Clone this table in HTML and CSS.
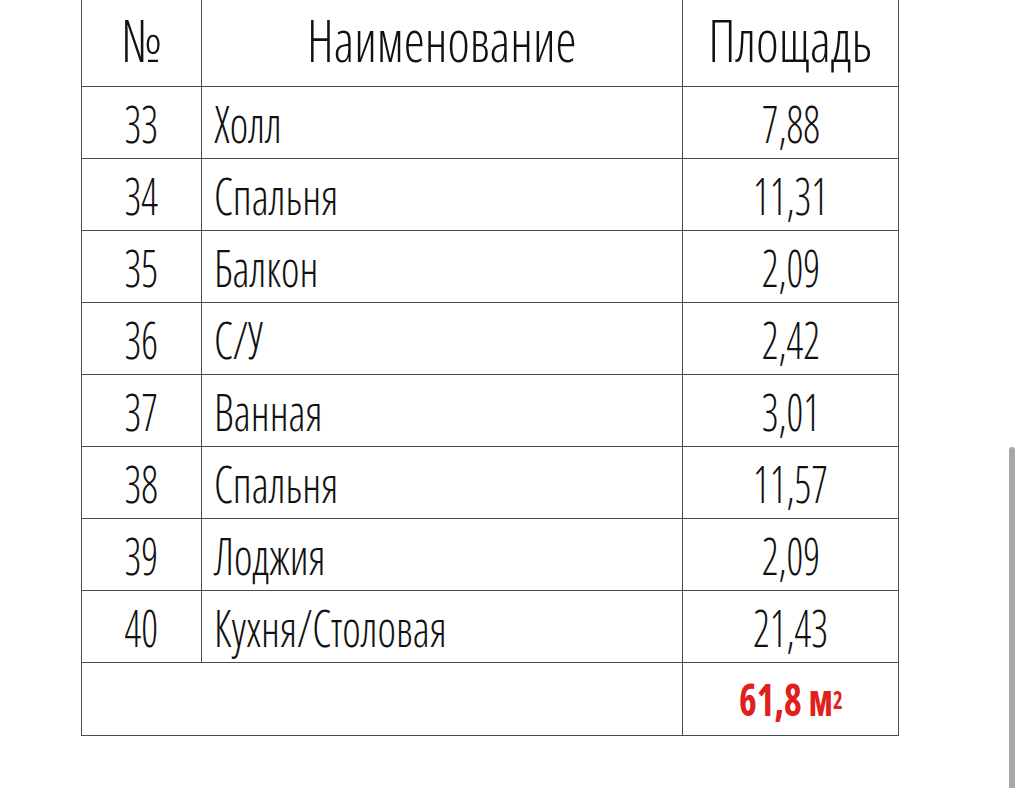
FILE: index.html
```html
<!DOCTYPE html>
<html lang="ru">
<head>
<meta charset="utf-8">
<title>Экспликация помещений</title>
<link rel="stylesheet" href="styles.css">
</head>
<body>
<div class="page">
  <div class="table">
    <div class="cell head num"><span class="t">№</span></div>
    <div class="cell head name"><span class="t">Наименование</span></div>
    <div class="cell head area"><span class="t">Площадь</span></div>

    <div class="cell num"><span class="t">33</span></div>
    <div class="cell name"><span class="t">Холл</span></div>
    <div class="cell area"><span class="t">7,88</span></div>

    <div class="cell num"><span class="t">34</span></div>
    <div class="cell name"><span class="t">Спальня</span></div>
    <div class="cell area"><span class="t">11,31</span></div>

    <div class="cell num"><span class="t">35</span></div>
    <div class="cell name"><span class="t">Балкон</span></div>
    <div class="cell area"><span class="t">2,09</span></div>

    <div class="cell num"><span class="t">36</span></div>
    <div class="cell name"><span class="t">С/У</span></div>
    <div class="cell area"><span class="t">2,42</span></div>

    <div class="cell num"><span class="t">37</span></div>
    <div class="cell name"><span class="t">Ванная</span></div>
    <div class="cell area"><span class="t">3,01</span></div>

    <div class="cell num"><span class="t">38</span></div>
    <div class="cell name"><span class="t">Спальня</span></div>
    <div class="cell area"><span class="t">11,57</span></div>

    <div class="cell num"><span class="t">39</span></div>
    <div class="cell name"><span class="t">Лоджия</span></div>
    <div class="cell area"><span class="t">2,09</span></div>

    <div class="cell num"><span class="t">40</span></div>
    <div class="cell name"><span class="t">Кухня/Столовая</span></div>
    <div class="cell area"><span class="t">21,43</span></div>

    <div class="cell total-label"></div>
    <div class="cell area total"><span class="t">61,8 м<sup>2</sup></span></div>
  </div>
</div>
<div class="scrollbar"></div>
</body>
</html>
```
FILE: styles.css
```css
html, body {
  margin: 0;
  padding: 0;
  background: #ffffff;
}

body {
  width: 1024px;
  height: 788px;
  overflow: hidden;
  position: relative;
  font-family: "Open Sans", "DejaVu Sans", sans-serif;
  color: #111111;
}

.page {
  padding-left: 81px;
}

.table {
  display: grid;
  grid-template-columns: 120px 481px 216px;
  grid-template-rows: 87px repeat(8, 72px) 73px;
  width: 818px;
  border-left: 1.5px solid #4a4a4a;
}

.cell {
  display: flex;
  align-items: center;
  border-right: 1.5px solid #4a4a4a;
  border-bottom: 1.5px solid #4a4a4a;
  font-size: 52px;
  font-weight: 340;
  font-stretch: 75%;
  line-height: 1.15;
  white-space: nowrap;
}

.t {
  display: inline-block;
  transform-origin: center center;
}

.num .t,
.area .t {
  transform: scaleX(0.79);
}

.name .t {
  transform: scaleX(0.85);
  transform-origin: left center;
}

.head {
  font-size: 59px;
  align-items: flex-start;
  padding-top: 6px;
}

.head.num .t {
  transform: scaleX(0.95);
}

.head.name .t {
  transform: scaleX(0.9);
  transform-origin: center center;
}

.head.area .t {
  transform: scaleX(0.92);
}

.num {
  justify-content: center;
}

.name {
  justify-content: flex-start;
  padding-left: 12px;
}

.head.name {
  justify-content: center;
  padding-left: 0;
}

.area {
  justify-content: center;
}

.total-label {
  grid-column: 1 / 3;
}

.total {
  color: #e0201c;
  font-weight: 700;
  font-size: 45px;
}

.area.total .t {
  transform: scaleX(0.84);
}

.total sup {
  font-size: 0.55em;
  line-height: 0;
  position: relative;
  top: -0.3em;
  vertical-align: baseline;
}

.scrollbar {
  position: absolute;
  left: 1009px;
  top: 447px;
  width: 6px;
  height: 360px;
  border-radius: 3px;
  background: #a7a7a7;
}
```
